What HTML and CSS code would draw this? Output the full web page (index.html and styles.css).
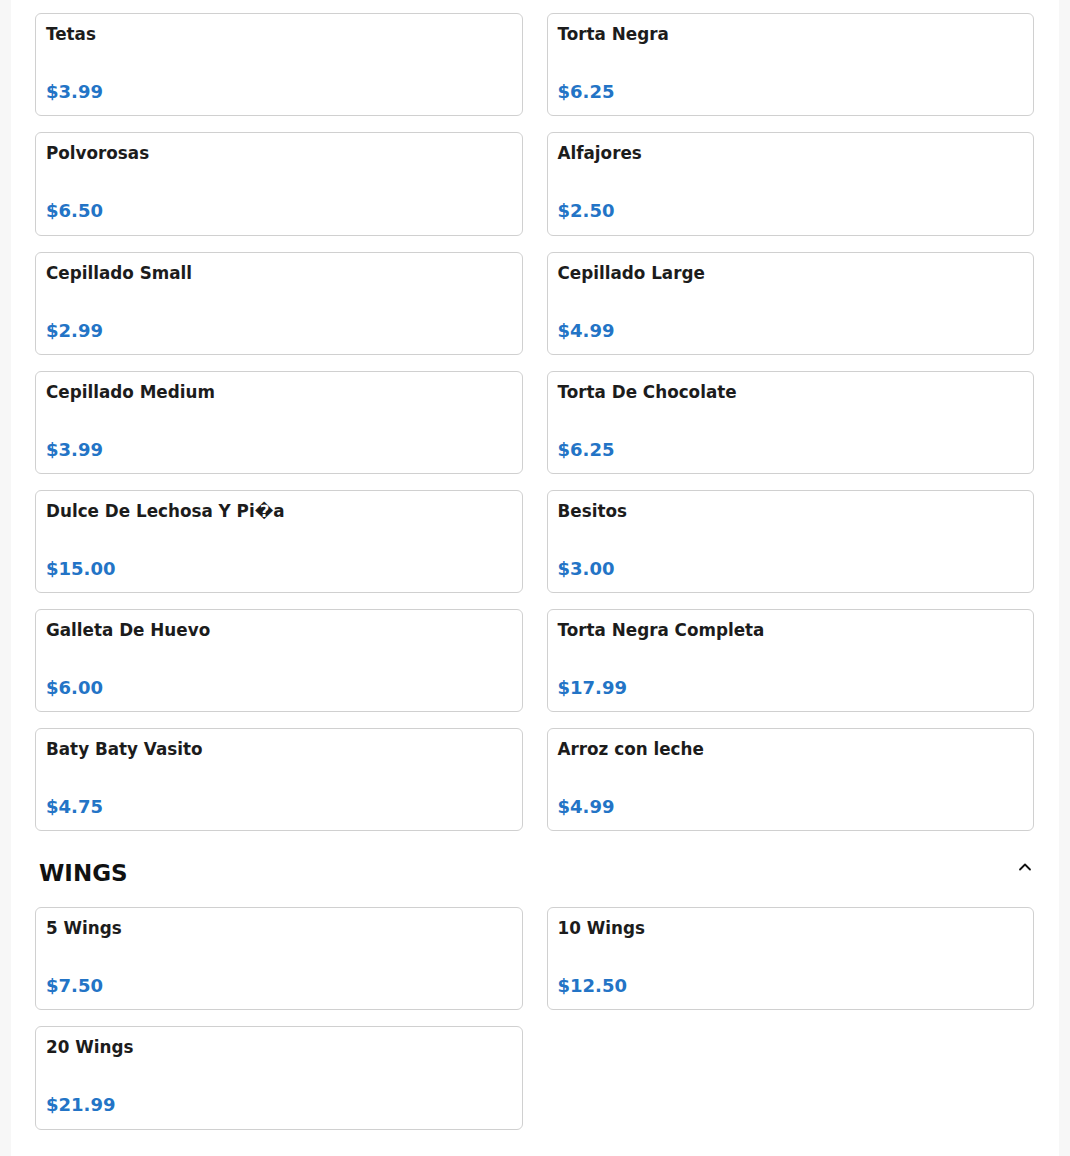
FILE: index.html
```html
<!DOCTYPE html>
<html lang="es">
<head>
<meta charset="utf-8">
<title>Menu</title>
<link rel="stylesheet" href="styles.css">
</head>
<body>
<main class="page">
  <section class="section">
    <div class="grid">
      <div class="card"><div class="name">Tetas</div><div class="price">$3.99</div></div>
      <div class="card"><div class="name">Torta Negra</div><div class="price">$6.25</div></div>
      <div class="card"><div class="name">Polvorosas</div><div class="price">$6.50</div></div>
      <div class="card"><div class="name">Alfajores</div><div class="price">$2.50</div></div>
      <div class="card"><div class="name">Cepillado Small</div><div class="price">$2.99</div></div>
      <div class="card"><div class="name">Cepillado Large</div><div class="price">$4.99</div></div>
      <div class="card"><div class="name">Cepillado Medium</div><div class="price">$3.99</div></div>
      <div class="card"><div class="name">Torta De Chocolate</div><div class="price">$6.25</div></div>
      <div class="card"><div class="name">Dulce De Lechosa Y Pi&#xFFFD;a</div><div class="price">$15.00</div></div>
      <div class="card"><div class="name">Besitos</div><div class="price">$3.00</div></div>
      <div class="card"><div class="name">Galleta De Huevo</div><div class="price">$6.00</div></div>
      <div class="card"><div class="name">Torta Negra Completa</div><div class="price">$17.99</div></div>
      <div class="card"><div class="name">Baty Baty Vasito</div><div class="price">$4.75</div></div>
      <div class="card"><div class="name">Arroz con leche</div><div class="price">$4.99</div></div>
    </div>
  </section>
  <section class="section">
    <div class="section-head">
      <h2 class="section-title">WINGS</h2>
      <svg class="chev" width="14" height="14" viewBox="0 0 14 14" aria-hidden="true"><path d="M2 9.5 L7 4.5 L12 9.5" fill="none" stroke="#111" stroke-width="1.8" stroke-linecap="round" stroke-linejoin="round"/></svg>
    </div>
    <div class="grid">
      <div class="card"><div class="name">5 Wings</div><div class="price">$7.50</div></div>
      <div class="card"><div class="name">10 Wings</div><div class="price">$12.50</div></div>
      <div class="card"><div class="name">20 Wings</div><div class="price">$21.99</div></div>
    </div>
  </section>
</main>
</body>
</html>
```
FILE: styles.css
```css
html, body {
  margin: 0;
  padding: 0;
}
body {
  background: #f7f7f7;
  font-family: "DejaVu Sans", sans-serif;
  color: #1c1c1c;
}
.page {
  margin: 0 11px 0 11px;
  background: #ffffff;
  padding: 13.2px 25px 40px 24px;
  min-height: 1156px;
  box-sizing: border-box;
}
.grid {
  display: grid;
  grid-template-columns: 1fr 1fr;
  column-gap: 24px;
  row-gap: 16px;
}
.card {
  border: 1px solid #d0d0d0;
  border-radius: 6px;
  padding: 10px 10px 0 10px;
  height: 103.17px;
  box-sizing: border-box;
  display: flex;
  flex-direction: column;
}
.name {
  font-size: 16.8px;
  font-weight: bold;
  line-height: 20px;
  color: #1c1c1c;
}
.price {
  margin-top: 38px;
  font-size: 18px;
  font-weight: bold;
  line-height: 20px;
  color: #2374c6;
}
.section-head {
  display: flex;
  align-items: center;
  justify-content: space-between;
  margin: 26px 0 18px 0;
  padding: 0 0 0 4px;
  height: 32px;
}
.section-title {
  margin: 0;
  font-size: 23px;
  font-weight: bold;
  line-height: 32px;
  color: #111;
}
.chev {
  display: block;
  margin-right: 2px;
  margin-top: -13px;
}
```
